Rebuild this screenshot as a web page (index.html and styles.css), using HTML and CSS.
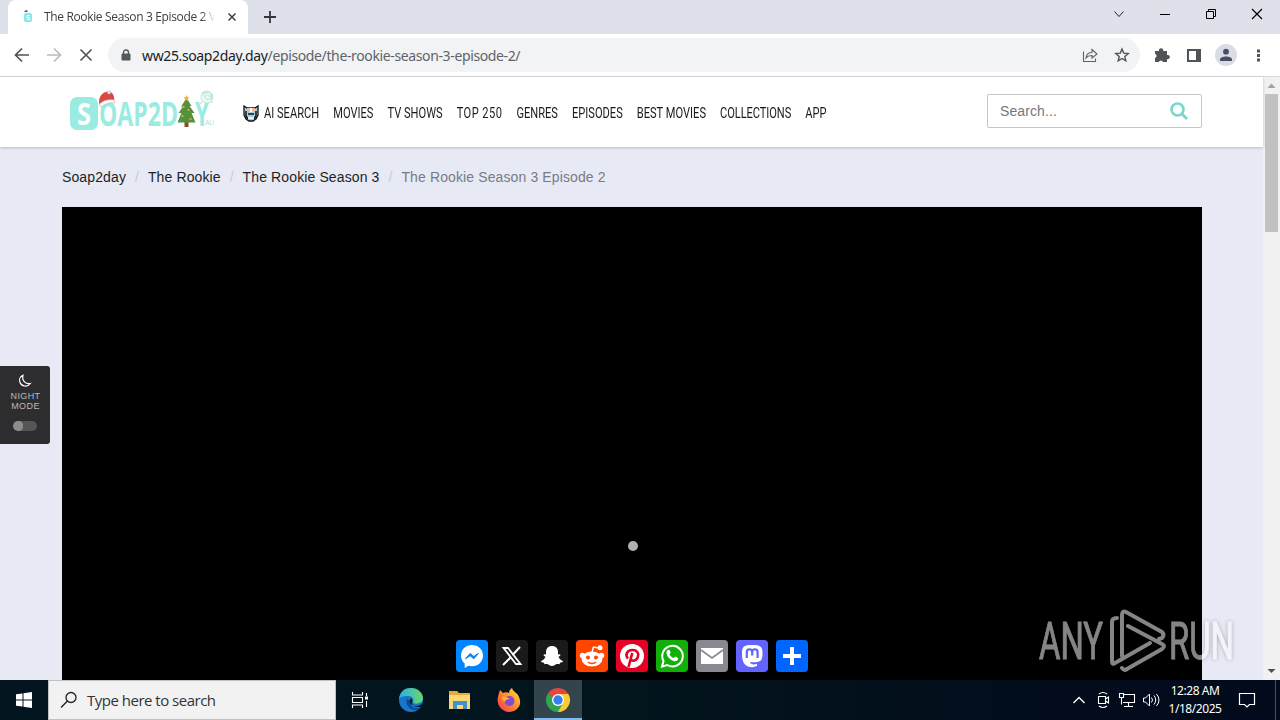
FILE: index.html
```
<!DOCTYPE html>
<html lang="en">
<head>
    <meta charset="UTF-8">
    <meta name="viewport" content="width=device-width, initial-scale=1.0">
    <title>The Rookie Season 3 Episode 2</title>
    <link rel="stylesheet" href="styles.css">
</head>
<body>
    <!-- Tab strip -->
    <div class="tab-strip">
        <div class="tab">
            <svg class="favicon" width="16" height="16" viewBox="0 0 16 16"><rect x="4" y="4" width="8" height="9" rx="2" fill="#8fe6e4"/><path d="M4 3l2-2 2 1-1 1z" fill="#355b70"/><path d="M9.500 6.500H7v2h2.500v2H7" fill="none" stroke="#fff"/></svg>
            <span class="tab-title">The Rookie Season 3 Episode 2 Vo</span>
            <svg class="tab-close" width="8" height="8" viewBox="0 0 8 8"><path d="M.5.5l7 7M7.500.5l-7 7" stroke="#3c4043" stroke-width="1.500"/></svg>
        </div>
        <svg class="new-tab" width="12" height="12" viewBox="0 0 12 12"><path d="M6 0v12M0 6h12" stroke="#333639" stroke-width="1.800"/></svg>
        <div class="window-buttons">
            <svg width="46" height="28" viewBox="0 0 46 28"><path d="M18.500 11.500l4.500 5 4.500-5" fill="none" stroke="#222"/></svg>
            <svg width="46" height="28" viewBox="0 0 46 28"><path d="M18 14.500h10" stroke="#000"/></svg>
            <svg width="46" height="28" viewBox="0 0 46 28"><path d="M18.500 11.500h7v7h-7zM20.500 11.500v-2h7v7h-2" fill="none" stroke="#000"/></svg>
            <svg width="46" height="28" viewBox="0 0 46 28"><path d="M18 9l10 10M28 9L18 19" stroke="#000" stroke-width="1.200"/></svg>
        </div>
    </div>

    <!-- Address bar -->
    <div class="toolbar">
        <svg width="32" height="32" viewBox="0 0 32 32"><path d="M23 16H10M16 9.500L9.500 16l6.500 6.500" fill="none" stroke="#505357" stroke-width="1.700"/></svg>
        <svg width="32" height="32" viewBox="0 0 32 32"><path d="M9 16h13M16 9.500l6.500 6.500-6.500 6.500" fill="none" stroke="#b9bbbe" stroke-width="1.700"/></svg>
        <svg width="32" height="32" viewBox="0 0 32 32"><path d="M10.500 10.500l11 11M21.500 10.500l-11 11" stroke="#505357" stroke-width="1.700"/></svg>
        <div class="address">
            <svg width="10" height="13" viewBox="0 0 10 13"><path d="M1 5h8v6H1z" fill="#55585c" stroke="#55585c"/><path d="M2.500 5V3.500a2.500 2.500 0 0 1 5 0V5" fill="none" stroke="#55585c" stroke-width="1.400"/></svg>
            <span class="url"><b>ww25.soap2day.day</b>/episode/the-rookie-season-3-episode-2/</span>
            <svg class="share" width="16" height="16" viewBox="0 0 16 16"><path d="M1.500 4.500v10h12v-3M4 11c.5-4 3-5.500 6-5.500V2.500L15 7l-5 4V8.500C7.500 8.500 5.500 9 4 11z" fill="none" stroke="#5f6368" stroke-width="1.100"/></svg>
            <svg width="16" height="16" viewBox="0 0 16 16"><path d="M8 2l1.700 4.100 4.500.4-3.400 2.900 1 4.400L8 11.500l-3.800 2.300 1-4.400-3.400-2.900 4.500-.4z" fill="none" stroke="#505357" stroke-width="1.400"/></svg>
        </div>
        <div class="tools">
            <svg width="32" height="32" viewBox="0 0 32 32"><path d="M9 12h4a2.200 2.200 0 1 1 4.200 0H21v4a2.200 2.200 0 1 1 0 4.200V23h-4a2.200 2.200 0 0 0-4.200 0H9v-4a2.200 2.200 0 0 0 0-4.200z" fill="#505357"/></svg>
            <svg width="32" height="32" viewBox="0 0 32 32"><path d="M10 11h12v11H10z" fill="none" stroke="#505357" stroke-width="2"/><path d="M18 10h5v13h-5z" fill="#505357"/></svg>
            <svg width="32" height="32" viewBox="0 0 32 32"><circle cx="16" cy="16" r="11" fill="#dbdde6"/><circle cx="16" cy="12.700" r="2.900" fill="#4b4f66"/><path d="M10 22v-1.500c0-4 12-4 12 0V22z" fill="#4b4f66"/></svg>
            <svg width="32" height="32" viewBox="0 0 32 32"><path d="M15 10.500h3v3h-3zM15 15h3v3h-3zM15 19.500h3v3h-3z" fill="#505357"/></svg>
        </div>
    </div>

    <!-- Page -->
    <div class="viewport">
        <main class="page">
            <header class="site-header">
                <svg class="logo" width="150" height="46" viewBox="0 0 150 46">
                    <rect x="1" y="8" width="28" height="33" rx="7" fill="#9aebe1"/>
                    <g font-family="Open Sans, sans-serif" font-weight="700">
                        <text x="8" y="36" font-size="31" fill="#fff" textLength="14" lengthAdjust="spacingAndGlyphs">S</text>
                        <text x="30" y="37" font-size="34" fill="#9aebe1" textLength="79" lengthAdjust="spacingAndGlyphs">OAP2D</text>
                        <text x="126" y="37" font-size="34" fill="#9aebe1" textLength="14" lengthAdjust="spacingAndGlyphs">Y</text>
                        <text x="136" y="36" font-size="7" font-weight="400" fill="#a8dfda" textLength="9">AU</text>
                    </g>
                    <path d="M30 14c0-8 5-12 10-11 4 0 6 5 5 9-5-1-10 0-14 4z" fill="#d94a42"/>
                    <path d="M30.500 15c4-4 9-5 14.500-4l1 3c-5-1-10 1-14 4z" fill="#fff" stroke="#c9a8a8" stroke-width=".6"/>
                    <circle cx="40" cy="3.500" r="1.700" fill="#eee" stroke="#888" stroke-width=".4"/>
                    <g transform="translate(-1.500 0)">
                        <path d="M117 33h4v5h-4z" fill="#8b4a2b"/>
                        <path d="M119 9l5 8h-2l5 7h-3l4 9.500h-18l4-9.500h-3l5-7h-2z" fill="#50933b"/>
                        <path d="M119 6l1 2 2 .3-1.500 1.500.4 2.200-1.900-1-1.900 1 .4-2.200L116 8.300l2-.3z" fill="#f3b33e"/>
                        <path d="M114 17h3v2h-3zM120 20h2v2h-2zM114 26h2v2h-2zM122 29h2v2h-2z" fill="#d6a34a"/>
                    </g>
                    <circle cx="138" cy="8" r="6" fill="#eefaf6" stroke="#b4e2d5" stroke-width=".8"/>
                    <path d="M134 7c0-5 8-5 8 0s-6 4-6 1 4-3 4 0M134 12l-3 3M142 12l2 2M133 4l4-1M143 5l-1 6" fill="none" stroke="#b4e2d5"/>
                </svg>
                <svg class="robot" width="16" height="17" viewBox="0 0 16 17"><path d="M1 1l3 2h8l3-2v9l-2 4-3 2H6l-3-2-2-4z" fill="#a9cde2" stroke="#111" stroke-width="1.300"/><path d="M4 3h8v4H4z" fill="#eab9a0"/><path d="M7 3h2v4H7z" fill="#fff"/><path d="M3 6v5l2 3M13 6v5l-2 3M5 9h6" fill="none" stroke="#111" stroke-width="1.500"/><path d="M5 12h6v2H5z" fill="#e5f1f5"/></svg>
                <nav>
                    <ul>
                        <li><a href="#">AI SEARCH</a></li>
                        <li><a href="#">MOVIES</a></li>
                        <li><a href="#">TV SHOWS</a></li>
                        <li><a href="#">TOP 250</a></li>
                        <li><a href="#">GENRES</a></li>
                        <li><a href="#">EPISODES</a></li>
                        <li><a href="#">BEST MOVIES</a></li>
                        <li><a href="#">COLLECTIONS</a></li>
                        <li><a href="#">APP</a></li>
                    </ul>
                </nav>
                <div class="search">
                    <span>Search...</span>
                    <svg width="18" height="18" viewBox="0 0 18 18"><circle cx="7.500" cy="7.500" r="6" fill="none" stroke="#79d6ce" stroke-width="2.600"/><path d="M12 12l5 5" stroke="#79d6ce" stroke-width="2.800"/></svg>
                </div>
            </header>

            <div class="breadcrumb">
                <a href="#">Soap2day</a><i>/</i><a href="#">The Rookie</a><i>/</i><a href="#">The Rookie Season 3</a><i>/</i><span>The Rookie Season 3 Episode 2</span>
            </div>

            <div class="player"><div class="loader"></div></div>

            <div class="night-mode">
                <svg width="14" height="14" viewBox="0 0 14 14"><path d="M5 1.200C2 2.500.8 5.500 2 8.500c1.500 4 7.500 5 10.300 1C8 10.500 3.500 7 5 1.200z" fill="none" stroke="#fff" stroke-width="1.200"/></svg>
                <span>NIGHT<br>MODE</span>
                <div class="switch"></div>
            </div>

            <div class="share-bar">
                <a class="messenger"><svg viewBox="0 0 32 32"><path d="M16 5C9.700 5 5 9.600 5 15.600c0 3.300 1.400 6.100 3.700 8V28l3.600-2.200c1.200.3 2.400.5 3.700.5 6.300 0 11-4.600 11-10.700S22.300 5 16 5z" fill="#fff"/><path d="M9.500 18.700l4.600-5.300 3.600 3 4.800-3-4.700 5.400-3.600-3z" fill="#0084ff" stroke="#0084ff"/></svg></a>
                <a class="x"><svg viewBox="0 0 32 32"><path d="M7.500 8h4.500l12.500 16H20z" fill="none" stroke="#fff" stroke-width="1.800"/><path d="M24 7l-7.500 8M14.500 17.500L7 25" stroke="#fff" stroke-width="2"/></svg></a>
                <a class="snapchat"><svg viewBox="0 0 32 32"><path d="M16 6c4 0 6 2.700 6 6v2.500l2-.3c1 .8.300 1.800-1.500 2.400.7 2.200 2 3.800 4.500 4.400-.2 1.300-1.500 1.500-3 1.800l-.5 1.500c-2.700-.5-3.500 0-5 1-1.600 1-3.400 1-5 0-1.500-1-2.300-1.500-5-1L8 22.800c-1.500-.3-2.800-.5-3-1.800 2.500-.6 3.800-2.200 4.500-4.400-1.800-.6-2.500-1.600-1.500-2.400l2 .3V12c0-3.300 2-6 6-6z" fill="#fff"/></svg></a>
                <a class="reddit"><svg viewBox="0 0 32 32"><g fill="#fff"><ellipse cx="16" cy="19" rx="10.500" ry="7.500"/><circle cx="6.500" cy="15.500" r="2.700"/><circle cx="25.500" cy="15.500" r="2.700"/><circle cx="24" cy="7.800" r="2.500"/></g><path d="M16 12l1.500-5 5 1" fill="none" stroke="#fff" stroke-width="1.500"/><circle cx="12" cy="17.500" r="2" fill="#ff4500"/><circle cx="20" cy="17.500" r="2" fill="#ff4500"/><path d="M12 22c2 2 6 2 8 0" fill="none" stroke="#ff4500" stroke-width="1.500"/></svg></a>
                <a class="pinterest"><svg viewBox="0 0 32 32"><circle cx="16" cy="16" r="12" fill="#fff"/><path d="M12.500 27l3.800-14M12 18.500c-3-3-1.500-8.500 4.500-8.500 4.500 0 6.500 3 5.500 6.500-1 4.500-6 5.500-7.200 2.500" fill="none" stroke="#e60023" stroke-width="2.600"/></svg></a>
                <a class="whatsapp"><svg viewBox="0 0 32 32"><path d="M6 26.500l1.500-5.400a10.300 10.300 0 1 1 3.800 3.900z" fill="none" stroke="#fff" stroke-width="2"/><path d="M12 10c1-.6 1.400-.4 1.800.6l.8 2c.2.700-1 1.500-1 1.900.8 1.600 2.200 2.900 4 3.500.6 0 1.200-1.500 1.700-1.500l2.500 1.200c.8.500.2 2-.5 2.700-4 3-11.500-3.600-10.800-8.400.1-.8.700-1.500 1.500-2z" fill="#fff"/></svg></a>
                <a class="email"><svg viewBox="0 0 32 32"><path d="M5 8h22v16H5z" fill="#fff"/><path d="M5 10l11 8 11-8" fill="none" stroke="#888990" stroke-width="1.800"/></svg></a>
                <a class="mastodon"><svg viewBox="0 0 32 32"><path d="M16 5c8 0 10.500 1.500 10.500 7.500 0 5-.5 8.500-4 9.300-3 .7-6 .7-8.500.3 0 2.500 3.500 2.800 7 2v2c-6 2.500-12.500.5-14-5C6.200 18.500 6 16 6 12.500 6 6 9 5 16 5z" fill="#fff"/><path d="M10.800 18v-6c0-3.700 5.400-3.700 5.400 0v3.500V12c0-3.700 5.400-3.700 5.400 0v6" fill="none" stroke="#6364ff" stroke-width="2.200"/></svg></a>
                <a class="more"><svg viewBox="0 0 32 32"><path d="M16 7v18M7 16h18" stroke="#fff" stroke-width="4"/></svg></a>
            </div>
        </main>
        <div class="scrollbar">
            <svg width="17" height="17" viewBox="0 0 17 17"><path d="M4.500 11l4-4.500 4 4.500z" fill="#a3a3a3"/></svg>
            <div class="thumb"></div>
            <svg class="down" width="17" height="17" viewBox="0 0 17 17"><path d="M4.500 6l4 4 4-4z" fill="#505050"/></svg>
        </div>
    </div>

    <svg class="watermark" width="204" height="68" viewBox="0 0 204 68">
        <g fill="#fff" stroke="#fff" font-family="Roboto, sans-serif" font-size="51">
            <text x="2" y="51" textLength="64" lengthAdjust="spacingAndGlyphs">ANY</text>
            <text x="132" y="51" textLength="65" lengthAdjust="spacingAndGlyphs">RUN</text>
        </g>
        <g fill="none" stroke="#fff" stroke-width="4" stroke-linecap="round" stroke-linejoin="round">
            <path d="M80 10q-5 0-5 4v39q0 4 3 2l35-20"/>
            <path d="M85 48V7q0-5 4-3l36 20q3 3 0 6l-3 1"/>
            <path d="M91 18l34 18q4 2 0 5L90 61q-3 2-5-1"/>
        </g>
    </svg>

    <!-- Taskbar -->
    <footer class="taskbar">
        <div class="start"><svg width="16" height="16" viewBox="0 0 16 16"><path d="M0 2.300L6.500 1.400V7.500H0zM7.500 1.200L16 0v7.500H7.500zM0 8.500h6.500v6.100L0 13.700zM7.500 8.500H16V16l-8.500-1.200z" fill="#fff"/></svg></div>
        <div class="task-search">
            <svg width="18" height="18" viewBox="0 0 18 18"><circle cx="11" cy="6.500" r="5" fill="none" stroke="#222" stroke-width="1.300"/><path d="M7.500 10L1 16.500" stroke="#222" stroke-width="1.500"/></svg>
            <span>Type here to search</span>
        </div>
        <div class="apps">
            <div class="app"><svg width="18" height="18" viewBox="0 0 18 18"><path d="M1.500 1v3h10V1M1.500 17v-3h10v3M1.500 6.500h10v5h-10zM15.500 2v3M15.500 10v6" fill="none" stroke="#fff" stroke-width="1.100"/><path d="M14 5.500h3v3h-3z" fill="#fff"/></svg></div>
            <div class="app"><svg width="26" height="26" viewBox="0 0 26 26"><defs><linearGradient id="edgeTop"><stop stop-color="#2faee5"/><stop offset="1" stop-color="#67d86a"/></linearGradient></defs><circle cx="13" cy="13" r="12" fill="#1676cd"/><path d="M1 12C2 4 7 1 13 1c7 0 12 5 12 10 0 6-9 7-10 4 2-3-1-6-5-6-4-.2-8 1-9 3z" fill="url(#edgeTop)"/><path d="M9 12c-2 5 2 11 9 11 2 0 4-1 5-3-6 3-12 0-10-6z" fill="#0c4a91"/><path d="M13 11c-3 4 0 8 5 8 3 0 5-1 7-3v5l-4-1c-3 0-7-1-7-4 1-2 0-3-1-5z" fill="#061a24"/></svg></div>
            <div class="app"><svg width="24" height="24" viewBox="0 0 24 24"><path d="M1 3h8l2 2h11v16H1z" fill="#e9a93b"/><path d="M1 7h21v14H1z" fill="#fcd873"/><path d="M5 21v-8h14v8h-4v-4H9v4z" fill="#3f91cf"/></svg></div>
            <div class="app"><svg width="26" height="26" viewBox="0 0 26 26"><defs><linearGradient id="fox" x1="1" y1="0" x2="0" y2="1"><stop stop-color="#ffe83d"/><stop offset=".5" stop-color="#ff8a28"/><stop offset="1" stop-color="#f42d5f"/></linearGradient></defs><path d="M3 6l1-3 3 3c2-1 4-1 6 0 0-3 2-4 3-5 1 4 5 4 7 9 4 9-3 15-10 15S0 18 2 10z" fill="url(#fox)"/><circle cx="13.500" cy="14" r="5" fill="#814bd4"/><path d="M6 10c4-2 5 2 8 1-1 2-5 1-5 4-2-1-3-3-3-5z" fill="#ffad35"/></svg></div>
            <div class="app active"><svg width="26" height="26" viewBox="0 0 26 26"><path d="M13 13L2.600 7A12 12 0 0 1 23.400 7z" fill="#e7463a"/><path d="M13 13L2.600 7A12 12 0 0 0 13 25z" fill="#31a454"/><path d="M13 25A12 12 0 0 0 23.400 7H13z" fill="#fbcb34"/><path d="M2.600 7L8 16l5-3zM18 16l-5 9-2-6z" fill="#31a454"/><circle cx="13" cy="13" r="6" fill="#fff"/><circle cx="13" cy="13" r="4.700" fill="#3a7fee"/></svg></div>
        </div>
        <div class="tray">
            <svg width="24" height="20" viewBox="0 0 24 20"><path d="M6.500 13l5.500-5.500 5.500 5.500" fill="none" stroke="#fff" stroke-width="1.400"/></svg>
            <svg width="24" height="20" viewBox="0 0 24 20"><path d="M7.500 6.500h7v7h-7zM14.500 9l3-2v6l-3-2M8 4q4-3 8 0M8 16q4 3 8 0" fill="none" stroke="#fff" stroke-width="1.100"/></svg>
            <svg width="24" height="20" viewBox="0 0 24 20"><path d="M9 4.500h10.500v8H8M13.500 12.500v4M9 16.500h9M4.500 3.500h4v4h-4zM6.500 7.500v7" fill="none" stroke="#fff" stroke-width="1.100"/></svg>
            <svg width="24" height="20" viewBox="0 0 24 20"><path d="M4.500 8v4h2l4 4V4l-4 4zM12.500 7.500q2 2.500 0 5M15 5.500q3.500 4.500 0 9M17.500 4q5 6 0 12" fill="none" stroke="#fff"/></svg>
            <div class="clock">12:28 AM<br>1/18/2025</div>
            <svg class="notes" width="18" height="18" viewBox="0 0 18 18"><path d="M1.500 2.500h15v11h-5L9 16l-2.500-2.500h-5z" fill="none" stroke="#fff" stroke-width="1.200"/></svg>
        </div>
        <div class="show-desktop"></div>
    </footer>
</body>
</html>
```
FILE: styles.css
```
* {
    box-sizing: border-box;
}

body {
    margin: 0;
    height: 720px;
    display: flex;
    flex-direction: column;
    overflow: hidden;
    font-family: "Liberation Sans", Arial, sans-serif;
    background: #fff;
}

svg {
    display: block;
    flex-shrink: 0;
}

a {
    text-decoration: none;
    color: inherit;
}

/* browser */
.tab-strip {
    height: 34px;
    background: #dee1e9;
    display: flex;
    align-items: flex-start;
    padding-left: 8px;
}

.tab {
    width: 240px;
    height: 34px;
    background: #fff;
    border-radius: 8px 8px 0 0;
    display: flex;
    align-items: center;
    padding-left: 12px;
}

.tab-title {
    width: 171px;
    margin: -1px 0 0 8px;
    overflow: hidden;
    white-space: nowrap;
    font: 12px "Open Sans", sans-serif;
    letter-spacing: -0.35px;
    color: #3c4043;
    -webkit-mask-image: linear-gradient(90deg, #000 92%, transparent);
    mask-image: linear-gradient(90deg, #000 92%, transparent);
}

.tab-close {
    margin-left: 13px;
}

.new-tab {
    margin: 11px 0 0 16px;
}

.window-buttons {
    display: flex;
    margin-left: auto;
}

.toolbar {
    height: 43px;
    border-bottom: 1px solid #d8d9dc;
    display: flex;
    align-items: center;
    padding-left: 6px;
}

.address {
    width: 1032px;
    height: 34px;
    margin-left: 6px;
    border-radius: 17px;
    background: #f1f3f4;
    display: flex;
    align-items: center;
    padding: 0 10px 0 13px;
}

.url {
    margin-left: 11px;
    font: 14px "Noto Sans", sans-serif;
    letter-spacing: -0.37px;
    color: #5f6368;
}

.url b {
    font-weight: 400;
    color: #202124;
}

.share {
    margin: 0 16px 0 auto;
}

.tools {
    display: flex;
    margin-left: 6px;
}

/* page */
.viewport {
    height: 603px;
    display: flex;
}

.page {
    width: 1263px;
    background: #e7eaf4;
    position: relative;
}

.site-header {
    height: 70px;
    background: #fff;
    box-shadow: 0 1px 3px rgba(0, 0, 0, 0.2);
    display: flex;
    align-items: center;
    padding: 0 61px 0 69px;
}

.robot {
    margin: 2px 0 0 24px;
}

nav {
    width: 560px;
    margin: 2px 0 0 5px;
}

ul {
    list-style: none;
    display: flex;
    gap: 19px;
    margin: 0;
    padding: 0;
    width: max-content;
    transform: scaleX(0.74);
    transform-origin: left;
}

ul li a {
    font-family: Roboto, sans-serif;
    font-size: 15px;
    color: #1b1b1b;
    white-space: nowrap;
}

ul li:nth-child(4) {
    letter-spacing: 0.6px;
}

ul li:nth-child(8) {
    letter-spacing: -0.1px;
}

.search {
    width: 215px;
    height: 34px;
    margin: -3px 0 0 auto;
    border: 1px solid #c5c7ca;
    border-radius: 2px;
    display: flex;
    align-items: center;
    justify-content: space-between;
    padding: 0 13px 0 12px;
    font-size: 14px;
    letter-spacing: 0.1px;
    color: #777;
}

.breadcrumb {
    height: 60px;
    padding-left: 62px;
    line-height: 60px;
    font-size: 14px;
    letter-spacing: 0.12px;
    color: #1d1f27;
    white-space: nowrap;
}

.breadcrumb i {
    margin: 0 9px;
    font-style: normal;
    letter-spacing: 0;
    color: #c7cad3;
}

.breadcrumb span {
    color: #777b84;
}

.player {
    width: 1140px;
    height: 473px;
    margin-left: 62px;
    background: #000;
    padding: 334px 0 0 566px;
}

.loader {
    width: 10px;
    height: 10px;
    border-radius: 50%;
    background: #b0b0b0;
}

/* floats over the left edge of the page */
.night-mode {
    position: absolute;
    left: 0;
    top: 289px;
    width: 50px;
    height: 78px;
    border-radius: 0 3px 3px 0;
    background: #2d2d30;
    display: flex;
    flex-direction: column;
    align-items: center;
    padding-top: 8px;
    font-size: 9px;
    line-height: 10px;
    letter-spacing: 0.4px;
    color: #bbb;
    text-align: center;
}

.night-mode span {
    margin: 3px 0 10px 1px;
}

.switch {
    width: 24px;
    height: 10px;
    border-radius: 5px;
    background: radial-gradient(circle at 5px 5px, #8c8c8c 5px, #555 5.5px);
}

.share-bar {
    position: absolute;
    left: 456px;
    top: 563px;
    display: flex;
    gap: 8px;
}

.share-bar a {
    width: 32px;
    height: 32px;
    border-radius: 4px;
}

.messenger { background: #0084ff; }
.x, .snapchat { background: #1a1a1a; }
.reddit { background: #ff4500; }
.pinterest { background: #e60023; }
.whatsapp { background: #12af0a; }
.email { background: #888990; }
.mastodon { background: #6364ff; }
.more { background: #0166ff; }

.scrollbar {
    width: 17px;
    background: #f1f1f1;
    display: flex;
    flex-direction: column;
}

.thumb {
    width: 13px;
    height: 138px;
    margin-left: 2px;
    background: #c1c1c1;
}

.down {
    margin-top: auto;
}

.watermark {
    position: absolute;
    left: 1037px;
    top: 608px;
    opacity: 0.52;
    filter: drop-shadow(0 0 2px rgba(0, 0, 0, 0.5));
}

/* taskbar */
.taskbar {
    height: 40px;
    background: linear-gradient(90deg, #02151e, #03141d 50%, #020c1b 85%, #020b1b);
    display: flex;
    color: #fff;
}

.start {
    width: 48px;
    display: flex;
    align-items: center;
    justify-content: center;
}

.task-search {
    width: 288px;
    background: #f2f2f2;
    border: 1px solid #bfc2c4;
    display: flex;
    align-items: center;
    gap: 9px;
    padding-left: 11px;
    font: 15px "Open Sans", sans-serif;
    letter-spacing: -0.5px;
    color: #333;
}

.apps {
    display: flex;
}

.app {
    width: 48px;
    display: flex;
    align-items: center;
    justify-content: center;
}

.app + .app {
    width: 49px;
    padding-left: 4px;
}

.apps .app.active {
    width: 48px;
    margin-left: 3px;
    padding: 2px 0 0;
    background: #34444c;
    border-bottom: 2px solid #7cbcf0;
}

.tray {
    display: flex;
    align-items: center;
    margin-left: auto;
    padding-right: 19px;
}

.clock {
    width: 64px;
    font: 12px/18px "Noto Sans", sans-serif;
    letter-spacing: -0.45px;
    text-align: center;
    white-space: nowrap;
}

.notes {
    margin-left: 11px;
}

.show-desktop {
    width: 5px;
    border-left: 1px solid #4a5361;
}
```
